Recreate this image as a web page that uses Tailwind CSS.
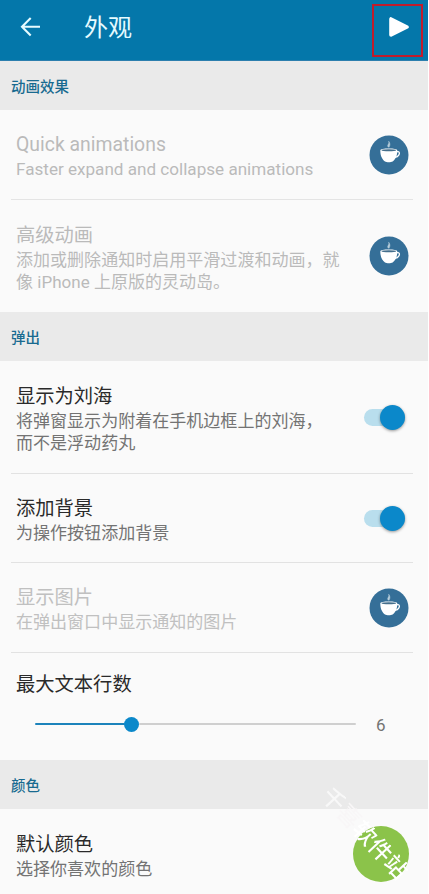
<!DOCTYPE html>
<html lang="zh-CN">
<head>
<meta charset="utf-8">
<title>外观</title>
<script src="https://cdn.jsdelivr.net/npm/@tailwindcss/browser@4"></script>
</head>
<body class="bg-white font-['Roboto','Noto_Sans_CJK_SC',sans-serif]">
<svg class="hidden">
  <symbol id="cup" viewBox="0 0 40 40">
    <circle cx="20" cy="20" r="19.500" fill="#356f98"/>
    <path d="M11.300 15.300c0-1.200 3.800-1.800 8.500-1.800s8.500.6 8.500 1.800c0 6-2 9.200-4.700 11.200-1.500 1-6.100 1-7.600 0-2.700-2-4.700-5.200-4.700-11.200z" fill="#fff"/>
    <ellipse cx="19.800" cy="15.300" rx="7.300" ry="1" fill="#456f8c"/>
    <path d="M27.500 16.900c2.800-1 3.500 1 2.400 3-.8 1.500-2.300 2.300-3.900 2.400" fill="none" stroke="#fff" stroke-width="1.300"/>
    <path d="M19.400 12.300c-2.200-2.200 1.400-3.200.2-6.200 2 2.500 1.600 3.900.5 6.200" fill="#b9cedb" stroke="#b9cedb" stroke-width=".4"/>
  </symbol>
</svg>
<div class="w-[428px] h-[894px] bg-[#fafafa] overflow-hidden relative flex flex-col">
  <header class="h-[61px] shrink-0 bg-[#0477aa] flex border-b border-[#2c7fae]">
    <svg class="w-5 h-5 mt-[17px] ml-[20px]" viewBox="0 0 20 20" fill="none" stroke="#e6fbff" stroke-width="2.100"><path d="M20 9.700H2M10.700 1 2 9.700l8.700 8.700"/></svg>
    <h1 class="ml-[44px] mt-[11px] text-[24px] leading-[34px] text-[#e6fbff]">外观</h1>
    <div class="ml-auto mr-[5px] mt-[4px] w-[51px] h-[53px] border-2 border-[#c01c2c]">
      <svg class="w-5 h-5 ml-[15px] mt-[10.500px]" viewBox="0 0 20 20"><path d="M2 2v16L18 10z" fill="#fff" stroke="#fff" stroke-width="3.600" stroke-linejoin="round"/></svg>
    </div>
  </header>

  <h2 class="h-[49px] shrink-0 bg-[#eaeaea] pl-[11px] text-[14.500px] leading-[53px] font-medium text-[#186a90]">动画效果</h2>

  <div class="h-[89px] shrink-0 ml-[16px] mr-[19px] flex items-center justify-between">
    <div class="text-[#bababa] pt-[5px]">
      <p class="text-[19.400px] leading-6">Quick animations</p>
      <p class="text-[17.100px] leading-6">Faster expand and collapse animations</p>
    </div>
    <svg class="w-10 h-10"><use href="#cup"/></svg>
  </div>
  <div class="h-px shrink-0 ml-[11px] mr-[15px] bg-[#e4e4e4]"></div>
  <div class="h-[112px] shrink-0 ml-[16px] mr-[19px] flex items-center justify-between">
    <div class="text-[#bababa] pt-[3px]">
      <p class="text-[19.300px] leading-[26px]">高级动画</p>
      <p class="text-[17.050px] leading-[22px] whitespace-nowrap">添加或删除通知时启用平滑过渡和动画，就<br>像 iPhone 上原版的灵动岛。</p>
    </div>
    <svg class="w-10 h-10"><use href="#cup"/></svg>
  </div>

  <h2 class="h-[49px] shrink-0 bg-[#eaeaea] pl-[11px] text-[14.500px] leading-[53px] font-medium text-[#186a90]">弹出</h2>

  <div class="h-[112px] shrink-0 ml-[16px] mr-[23px] flex items-center justify-between">
    <div class="pt-[4px]">
      <p class="text-[19.300px] leading-[26px] text-[#2a2a2a]">显示为刘海</p>
      <p class="text-[17.050px] leading-[22px] text-[#737373] whitespace-nowrap">将弹窗显示为附着在手机边框上的刘海，<br>而不是浮动药丸</p>
    </div>
    <div class="w-[41px] h-[17px] rounded-full bg-[#b9deed] flex items-center justify-end"><span class="w-[25px] h-[25px] rounded-full bg-[#0b88ca] shadow-[0_1px_3px_rgba(0,0,0,0.4)]"></span></div>
  </div>
  <div class="h-px shrink-0 ml-[11px] mr-[15px] bg-[#e2e2e2]"></div>
  <div class="h-[88px] shrink-0 ml-[16px] mr-[23px] flex items-center justify-between">
    <div class="pt-[3px]">
      <p class="text-[19.300px] leading-[26px] text-[#2a2a2a]">添加背景</p>
      <p class="text-[17.050px] leading-[22px] text-[#737373]">为操作按钮添加背景</p>
    </div>
    <div class="w-[41px] h-[17px] rounded-full bg-[#b9deed] flex items-center justify-end"><span class="w-[25px] h-[25px] rounded-full bg-[#0b88ca] shadow-[0_1px_3px_rgba(0,0,0,0.4)]"></span></div>
  </div>
  <div class="h-px shrink-0 ml-[11px] mr-[15px] bg-[#e2e2e2]"></div>
  <div class="h-[89px] shrink-0 ml-[16px] mr-[19px] flex items-center justify-between">
    <div class="text-[#c0c0c0] pt-[2px]">
      <p class="text-[19.300px] leading-[26px]">显示图片</p>
      <p class="text-[17.050px] leading-[22px]">在弹出窗口中显示通知的图片</p>
    </div>
    <svg class="w-10 h-10"><use href="#cup"/></svg>
  </div>
  <div class="h-px shrink-0 ml-[11px] mr-[15px] bg-[#e2e2e2]"></div>
  <div class="h-[107px] shrink-0 pl-[16px] pt-[19px]">
    <p class="text-[19.300px] leading-[26px] text-[#2a2a2a]">最大文本行数</p>
    <div class="flex items-center h-6 mt-[14px] ml-[19px]">
      <span class="w-[90px] h-[2.500px] rounded-full bg-[#1c83bb]"></span>
      <span class="w-[15px] h-[15px] -ml-px rounded-full bg-[#0b88ca]"></span>
      <span class="w-[217px] h-[2.500px] rounded-full bg-[#cfcfcf]"></span>
      <span class="ml-[20px] pt-[2px] text-[17px] leading-6 text-[#737373]">6</span>
    </div>
  </div>

  <h2 class="h-[49px] shrink-0 bg-[#eaeaea] pl-[11px] text-[14.500px] leading-[53px] font-medium text-[#186a90]">颜色</h2>

  <div class="h-[89px] shrink-0 ml-[16px] mr-[19px] flex items-center justify-between">
    <div class="pt-[4px]">
      <p class="text-[19.300px] leading-[26px] text-[#2a2a2a]">默认颜色</p>
      <p class="text-[17.050px] leading-[22px] text-[#737373]">选择你喜欢的颜色</p>
    </div>
    <span class="w-14 h-14 rounded-full bg-[#8bc34a]"></span>
  </div>
  <div class="absolute left-[305px] top-[822px] w-[118px] text-center whitespace-nowrap rotate-[47deg] text-[23px] leading-6 font-medium text-transparent bg-clip-text bg-[linear-gradient(90deg,#f8f8f8_0_23px,#f8f6f7_24px_46px,#ffffff_47px)]">千喜软件站</div>
</div>
</body>
</html>
